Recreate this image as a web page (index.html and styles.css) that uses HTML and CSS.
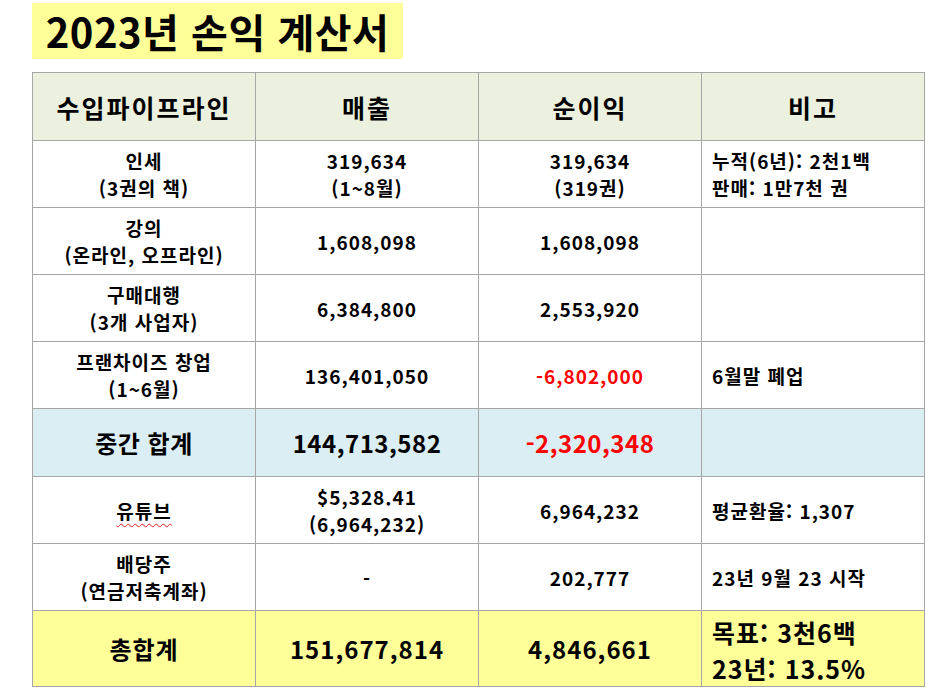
FILE: index.html
```html
<!DOCTYPE html>
<html lang="ko">
<head>
<meta charset="utf-8">
<link rel="stylesheet" href="styles.css">
</head>
<body>
<div class="page">
  <h1 class="title">2023년 손익 계산서</h1>
  <table class="pl">
    <tr class="head">
      <th>수입파이프라인</th><th>매출</th><th>순이익</th><th>비고</th>
    </tr>
    <tr class="r">
      <td>인세<br>(3권의 책)</td>
      <td>319,634<br>(1~8월)</td>
      <td>319,634<br>(319권)</td>
      <td class="note">누적(6년): 2천1백<br>판매: 1만7천 권</td>
    </tr>
    <tr class="r">
      <td>강의<br>(온라인, 오프라인)</td>
      <td>1,608,098</td>
      <td>1,608,098</td>
      <td class="note"></td>
    </tr>
    <tr class="r">
      <td>구매대행<br>(3개 사업자)</td>
      <td>6,384,800</td>
      <td>2,553,920</td>
      <td class="note"></td>
    </tr>
    <tr class="r">
      <td>프랜차이즈 창업<br>(1~6월)</td>
      <td>136,401,050</td>
      <td class="neg">-6,802,000</td>
      <td class="note">6월말 폐업</td>
    </tr>
    <tr class="mid">
      <td>중간 합계</td>
      <td>144,713,582</td>
      <td class="neg">-2,320,348</td>
      <td class="note"></td>
    </tr>
    <tr class="r">
      <td><span class="spell">유튜브</span></td>
      <td>$5,328.41<br>(6,964,232)</td>
      <td>6,964,232</td>
      <td class="note">평균환율: 1,307</td>
    </tr>
    <tr class="r">
      <td>배당주<br>(연금저축계좌)</td>
      <td>-</td>
      <td>202,777</td>
      <td class="note">23년 9월 23 시작</td>
    </tr>
    <tr class="total">
      <td>총합계</td>
      <td>151,677,814</td>
      <td>4,846,661</td>
      <td class="note goal">목표: 3천6백<br>23년: 13.5%</td>
    </tr>
  </table>
</div>
</body>
</html>
```

FILE: styles.css
```css
html, body {
  margin: 0;
  padding: 0;
  background: #ffffff;
}
body {
  font-family: "Noto Sans CJK KR", "Noto Sans", sans-serif;
  color: #000000;
}
.page {
  padding: 3px 0 0 32px;
}
.title {
  margin: 0;
  width: 371px;
  height: 56px;
  background: #ffff99;
  font-size: 40px;
  font-weight: 700;
  line-height: 56px;
  text-align: center;
  letter-spacing: 0.5px;
}
.pl {
  margin-top: 13px;
  border-collapse: collapse;
  table-layout: fixed;
  width: 889px;
}
.pl th, .pl td {
  border: 1px solid #a6a6a6;
  width: 222px;
  padding: 0;
  text-align: center;
  vertical-align: middle;
  font-weight: 700;
}
.pl th {
  font-size: 25px;
  letter-spacing: 2px;
}
.pl td {
  font-size: 19px;
  line-height: 27px;
  letter-spacing: 1px;
}
.head { height: 68px; background: #ebf1de; }
.r { height: 67px; }
.mid { height: 68px; background: #dbeef3; }
.mid td { font-size: 24px; letter-spacing: 0.5px; }
.total { height: 76px; background: #ffff99; }
.total td { font-size: 24px; line-height: 34px; letter-spacing: 1px; }
.pl .total td.goal { font-size: 25px; line-height: 36px; padding-top: 2px; }
.pl td.note {
  text-align: left;
  padding-left: 10px;
}
.pl .neg { color: #ff0000; }
.spell {
  text-decoration: underline wavy #e02020;
  text-decoration-thickness: 1px;
  text-underline-offset: 4px;
}
```
